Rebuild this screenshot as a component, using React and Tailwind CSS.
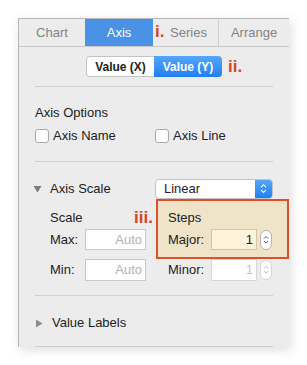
import React from "react";

function Chevrons({ color = "#fff", size = 8 }) {
  return (
    <svg width={size} height={size * 1.6} viewBox="0 0 8 13" fill="none">
      <path d="M1.5 4.5 L4 2 L6.5 4.5" stroke={color} strokeWidth="1.3" strokeLinecap="round" strokeLinejoin="round" />
      <path d="M1.5 8.5 L4 11 L6.5 8.5" stroke={color} strokeWidth="1.3" strokeLinecap="round" strokeLinejoin="round" />
    </svg>
  );
}

function Stepper({ light }) {
  return (
    <div className={`ml-[3px] flex h-[20px] w-[12px] items-center justify-center rounded-full border bg-white ${light ? "border-[#d6d6d6]" : "border-[#b4b4b4]"}`}>
      <Chevrons color={light ? "#b8b8b8" : "#555"} size={6} />
    </div>
  );
}

function Checkbox({ label }) {
  return (
    <div className="flex h-[18px] items-center">
      <div className="h-[14px] w-[14px] rounded-[3px] border border-[#a9a9a9] bg-white" />
      <span className="ml-[4px] text-[13px] text-[#222]">{label}</span>
    </div>
  );
}

function Sep() {
  return <div className="mx-[16px] h-px bg-[#cfcfcf]" />;
}

export default function App() {
  return (
    <div className="h-[365px] w-[307px] bg-white pl-[18px] pt-[18px] font-['Liberation_Sans',Arial,sans-serif] leading-[16px]">
      <div className="relative flex h-[329px] w-[271px] flex-col border-l border-t border-[#b9b9b9] bg-[#ececec] shadow-[2px_3px_10px_rgba(0,0,0,0.13)]">
        {/* tabs */}
        <div className="flex h-[28px] border-b border-[#c9c9c9] text-[13px]">
          <div className="flex w-[66px] items-center justify-center text-[#838383]">Chart</div>
          <div className="flex w-[68px] items-center justify-center bg-[#4a92e6] text-white">Axis</div>
          <div className="relative flex w-[66px] items-center justify-center border-r border-[#cfcfcf] pl-[6px] text-[#838383]">
            <span className="absolute left-[2px] top-[4px] text-[17px] font-bold leading-[18px] text-[#d2462b]">i.</span>
            Series
          </div>
          <div className="flex flex-1 items-center justify-center text-[#838383]">Arrange</div>
        </div>

        {/* segmented */}
        <div className="relative mt-[9px] flex h-[21px] pl-[67px]">
          <div className="flex h-[21px] w-[68px] items-center justify-center rounded-l-[4px] border border-r-0 border-[#c4c4c4] bg-white text-[12px] font-bold text-[#222]">
            Value (X)
          </div>
          <div className="flex h-[21px] w-[68px] items-center justify-center rounded-r-[4px] bg-gradient-to-b from-[#55a6fa] to-[#1f7ff0] text-[12px] font-bold text-white">
            Value (Y)
          </div>
          <span className="ml-[6px] text-[17px] font-bold leading-[21px] text-[#d2462b]">ii.</span>
        </div>

        <div className="mt-[9px]">
          <Sep />
        </div>

        <div className="mt-[18px] pl-[16px] text-[13px] text-[#222]">Axis Options</div>
        <div className="mt-[6px] flex pl-[16px]">
          <div className="w-[120px]">
            <Checkbox label="Axis Name" />
          </div>
          <Checkbox label="Axis Line" />
        </div>

        <div className="mt-[16px]">
          <Sep />
        </div>

        {/* axis scale */}
        <div className="mt-[17px] flex h-[20px] items-center pl-[14px]">
          <svg width="9" height="8" viewBox="0 0 9 8" className="mr-[8px]">
            <path d="M0.5 1 L8.5 1 L4.5 7.5 Z" fill="#7c7c7c" />
          </svg>
          <span className="w-[105px] text-[13px] text-[#222]">Axis Scale</span>
          <div className="flex h-[20px] w-[118px] overflow-hidden rounded-[4px] border border-[#c4c4c4] bg-white">
            <div className="flex flex-1 items-center pl-[8px] text-[13px] text-[#222]">Linear</div>
            <div className="flex w-[17px] items-center justify-center bg-gradient-to-b from-[#55a6fa] to-[#1f7ff0]">
              <Chevrons color="#fff" size={7} />
            </div>
          </div>
        </div>

        {/* scale / steps */}
        <div className="flex">
          <div className="relative w-[137px] pl-[31px] pt-[11px] text-[13px] text-[#222]">
            <div className="flex h-[16px] items-center">Scale</div>
            <span className="absolute left-[115px] top-[10px] text-[17px] font-bold leading-[18px] text-[#d2462b]">iii.</span>
            <div className="mt-[3px] flex h-[21px] items-center">
              <span className="w-[35px]">Max:</span>
              <div className="flex h-[21px] w-[61px] items-center justify-end border border-[#c9c9c9] bg-white pr-[3px] text-[#b2b2b2]">Auto</div>
            </div>
            <div className="mt-[9px] flex h-[22px] items-center">
              <span className="w-[35px]">Min:</span>
              <div className="flex h-[22px] w-[61px] items-center justify-end border border-[#c9c9c9] bg-white pr-[3px] text-[#b2b2b2]">Auto</div>
            </div>
          </div>
          <div className="flex flex-1 flex-col text-[13px] text-[#222]">
            <div className="h-[60px] border-2 border-[#de4f2c] bg-[#efe3c8] pl-[10px] pt-[9px]">
              <div className="flex h-[16px] items-center">Steps</div>
              <div className="mt-[3px] flex h-[21px] items-center">
                <span className="w-[43px]">Major:</span>
                <div className="flex h-[21px] w-[46px] items-center justify-end border border-[#d4c6a2] bg-[#fdf3da] pr-[3px] text-[#222]">1</div>
                <Stepper />
              </div>
            </div>
            <div className="flex h-[22px] items-center pl-[12px]">
              <span className="w-[43px]">Minor:</span>
              <div className="flex h-[22px] w-[46px] items-center justify-end border border-[#d6d6d6] bg-white pr-[3px] text-[#c4c4c4]">1</div>
              <Stepper light />
            </div>
          </div>
        </div>

        <div className="mt-[14px]">
          <Sep />
        </div>

        <div className="mt-[19px] flex h-[16px] items-center pl-[16px]">
          <svg width="8" height="9" viewBox="0 0 8 9" className="mr-[9px]">
            <path d="M1 0.5 L7.5 4.5 L1 8.5 Z" fill="#8a8a8a" />
          </svg>
          <span className="text-[13px] text-[#222]">Value Labels</span>
        </div>

        <div className="mt-[15px]">
          <Sep />
        </div>
      </div>
    </div>
  );
}
